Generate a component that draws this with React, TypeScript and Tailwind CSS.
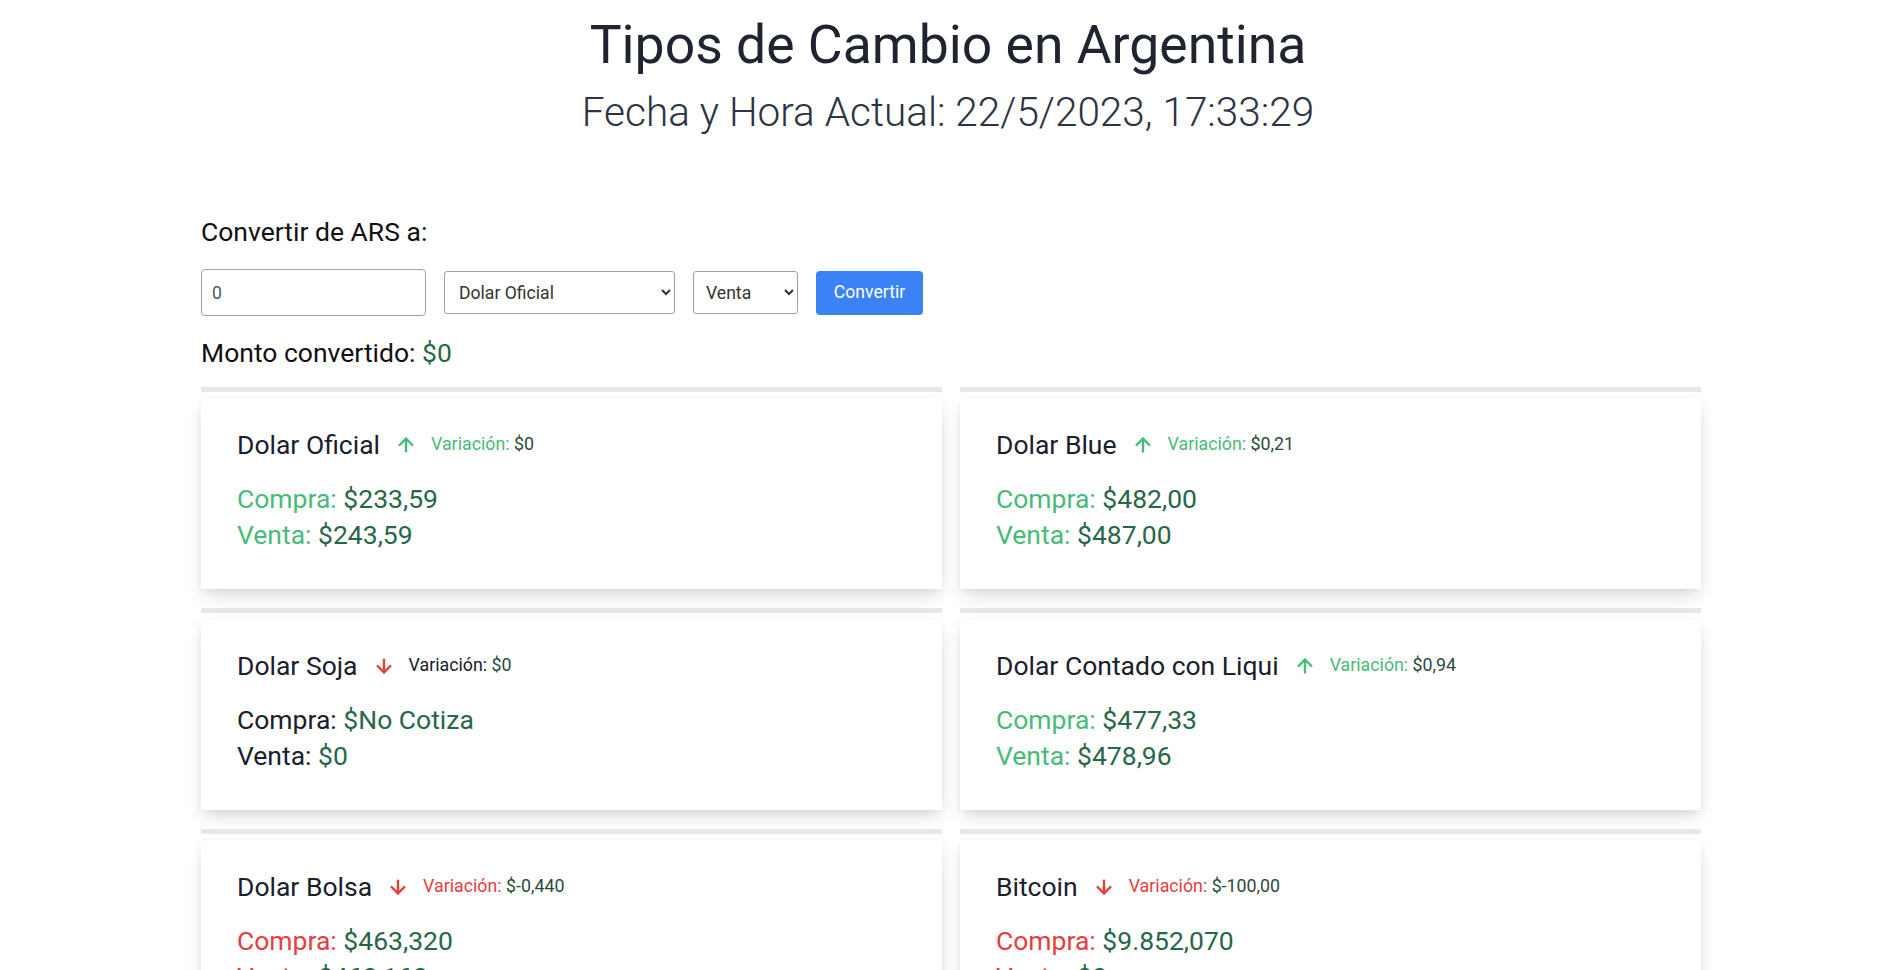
import { ArrowDown, ArrowUp } from "lucide-react";

type Quote = {
  name: string;
  up: boolean;
  tone: "green" | "red" | "plain";
  variation: string;
  compra: string;
  venta: string;
};

const quotes: Quote[] = [
  { name: "Dolar Oficial", up: true, tone: "green", variation: "$0", compra: "$233,59", venta: "$243,59" },
  { name: "Dolar Blue", up: true, tone: "green", variation: "$0,21", compra: "$482,00", venta: "$487,00" },
  { name: "Dolar Soja", up: false, tone: "plain", variation: "$0", compra: "$No Cotiza", venta: "$0" },
  { name: "Dolar Contado con Liqui", up: true, tone: "green", variation: "$0,94", compra: "$477,33", venta: "$478,96" },
  { name: "Dolar Bolsa", up: false, tone: "red", variation: "$-0,440", compra: "$463,320", venta: "$463,160" },
  { name: "Bitcoin", up: false, tone: "red", variation: "$-100,00", compra: "$9.852,070", venta: "$0" },
];

const labelColor = (tone: Quote["tone"]) =>
  tone === "green" ? "text-[#48bb78]" : tone === "red" ? "text-[#e53e3e]" : "text-[#1a202c]";

function QuoteCard({ q }: { q: Quote }) {
  return (
    <div>
      <div className="h-[5px] bg-[#e8e8e8]" />
      <div className="mt-[6px] bg-white px-[36px] pt-[29px] pb-[36px] shadow-[0_10px_18px_-4px_rgba(0,0,0,0.14),0_2px_8px_rgba(0,0,0,0.06)]">
        <div className="flex items-center">
          <span className="text-[26.5px] leading-[35px] text-[#1a202c]">{q.name}</span>
          <span className="ml-[15px] mr-[14px]">
            {q.up ? (
              <ArrowUp size={22} strokeWidth={2.6} className="text-[#48bb78]" />
            ) : (
              <ArrowDown size={22} strokeWidth={2.6} className="text-[#e53e3e]" />
            )}
          </span>
          <span className={`text-[17.8px] ${q.up ? "text-[#48bb78]" : q.tone === "red" ? "text-[#e53e3e]" : "text-[#1a202c]"}`}>
            Variación: <span className="text-[#2a4a3a]">{q.variation}</span>
          </span>
        </div>
        <div className="mt-[19px] text-[26.5px] leading-[36px]">
          <p>
            <span className={labelColor(q.tone)}>Compra:</span>{" "}
            <span className="text-[#276749]">{q.compra}</span>
          </p>
          <p>
            <span className={labelColor(q.tone)}>Venta:</span>{" "}
            <span className="text-[#276749]">{q.venta}</span>
          </p>
        </div>
      </div>
    </div>
  );
}

export default function App() {
  return (
    <div className="min-h-screen bg-white pb-10 font-['Roboto',sans-serif] text-[#1a202c]">
      <header className="pt-[18px] text-center">
        <h1 className="text-[53.5px] leading-[53px] text-[#1f2430]">Tipos de Cambio en Argentina</h1>
        <h2 className="mt-[21px] text-[40.5px] leading-[40px] font-light text-[#2d3340]">
          Fecha y Hora Actual: 22/5/2023, 17:33:29
        </h2>
      </header>

      <main className="mx-auto mt-[82px] w-[1506px] pl-[6px]">
        <h3 className="text-[26.5px] leading-[35px] text-[#111]">Convertir de ARS a:</h3>

        <div className="mt-[20px] flex items-center">
          <input
            defaultValue="0"
            className="h-[47px] w-[225px] rounded-[4px] border border-[#9ca3af] px-[10px] text-[17.6px] text-[#4a5568]"
          />
          <select className="ml-[18px] h-[43px] w-[231px] rounded-[3px] border border-[#9ca3af] px-[10px] text-[17.6px] text-[#333]">
            <option>Dolar Oficial</option>
          </select>
          <select className="ml-[18px] h-[43px] w-[105px] rounded-[3px] border border-[#9ca3af] px-[8px] text-[17.6px] text-[#333]">
            <option>Venta</option>
          </select>
          <button className="ml-[18px] h-[44px] w-[107px] rounded-[4px] bg-[#3b82f6] text-[17.6px] text-white">
            Convertir
          </button>
        </div>

        <h3 className="mt-[19px] text-[26.5px] leading-[35px] text-[#111]">
          Monto convertido: <span className="text-[#276749]">$0</span>
        </h3>

        <div className="mt-[17px] grid grid-cols-2 gap-x-[18px] gap-y-[19px]">
          {quotes.map((q) => (
            <QuoteCard key={q.name} q={q} />
          ))}
        </div>
      </main>
    </div>
  );
}
